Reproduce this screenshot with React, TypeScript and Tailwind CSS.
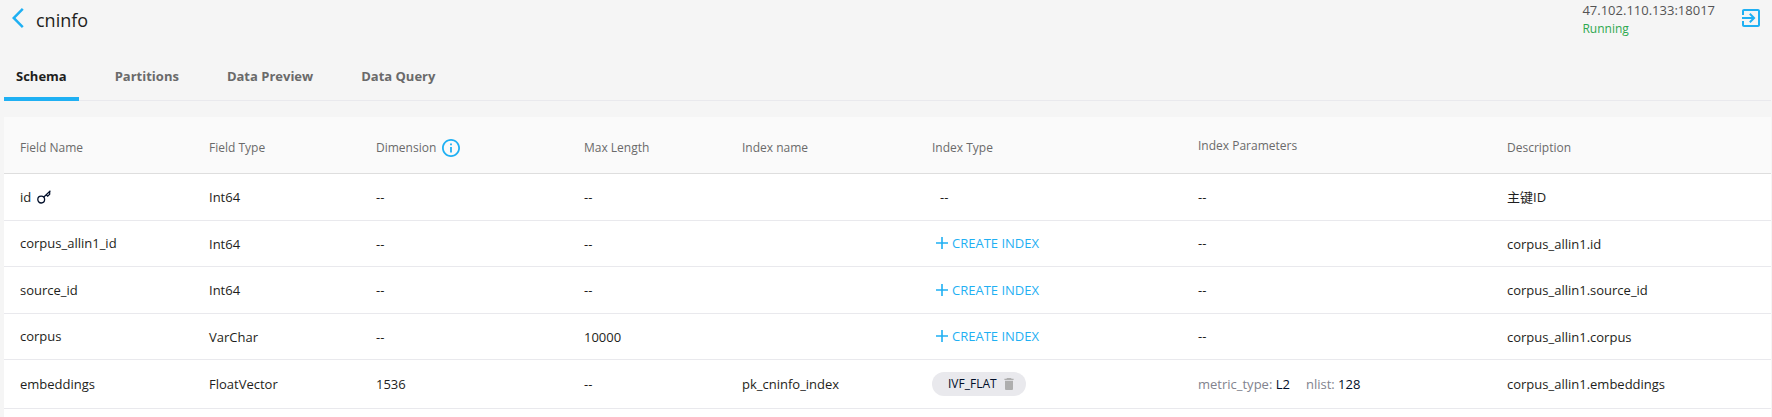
import type { ReactNode } from "react";

type Param = { name: string; value: string };

type Field = {
  name: string;
  primary?: boolean;
  type: string;
  dimension: string;
  maxLength: string;
  indexName: string;
  indexType: string | null;
  params: Param[];
  description: string;
};

const fields: Field[] = [
  { name: "id", primary: true, type: "Int64", dimension: "--", maxLength: "--", indexName: "", indexType: null, params: [], description: "主键ID" },
  { name: "corpus_allin1_id", type: "Int64", dimension: "--", maxLength: "--", indexName: "", indexType: null, params: [], description: "corpus_allin1.id" },
  { name: "source_id", type: "Int64", dimension: "--", maxLength: "--", indexName: "", indexType: null, params: [], description: "corpus_allin1.source_id" },
  { name: "corpus", type: "VarChar", dimension: "--", maxLength: "10000", indexName: "", indexType: null, params: [], description: "corpus_allin1.corpus" },
  {
    name: "embeddings",
    type: "FloatVector",
    dimension: "1536",
    maxLength: "--",
    indexName: "pk_cninfo_index",
    indexType: "IVF_FLAT",
    params: [
      { name: "metric_type", value: "L2" },
      { name: "nlist", value: "128" },
    ],
    description: "corpus_allin1.embeddings",
  },
];

const tabs = ["Schema", "Partitions", "Data Preview", "Data Query"];

function BackIcon() {
  return (
    <svg viewBox="0 0 12 20" className="h-5 w-3" fill="#1fb0f3" aria-hidden="true">
      <path d="M11.67 1.87 9.9.1 0 10l9.9 9.9 1.77-1.77L3.54 10z" />
    </svg>
  );
}

function ExitIcon() {
  return (
    <svg viewBox="0 0 24 24" className="size-6" fill="#1fb0f3" aria-hidden="true">
      <path d="M10.09 15.59 11.5 17l5-5-5-5-1.41 1.41L12.67 11H3v2h9.67zM19 3H5c-1.11 0-2 .9-2 2v4h2V5h14v14H5v-4H3v4c0 1.1.89 2 2 2h14c1.1 0 2-.9 2-2V5c0-1.1-.9-2-2-2z" />
    </svg>
  );
}

function InfoIcon() {
  return (
    <svg viewBox="2 2 20 20" className="size-[18px]" fill="#1fb0f3" aria-hidden="true">
      <path d="M11 7h2v2h-2zm0 4h2v6h-2zm1-9C6.48 2 2 6.48 2 12s4.48 10 10 10 10-4.48 10-10S17.52 2 12 2zm0 18c-4.41 0-8-3.59-8-8s3.59-8 8-8 8 3.59 8 8-3.59 8-8 8z" />
    </svg>
  );
}

function KeyIcon() {
  return (
    <svg viewBox="0 0 14 14" className="size-[14px]" fill="none" stroke="#010e29" role="img" aria-label="Primary key">
      <circle cx="4.2" cy="9.6" r="3.4" strokeWidth="1.3" />
      <path d="M6.6 7.2 13.4 0.8M9.2 4.8l1.5 1.4 2-1.9V1.6" strokeWidth="1.2" />
    </svg>
  );
}

function PlusIcon() {
  return (
    <svg viewBox="0 0 12 12" className="size-3" stroke="#1fb0f3" strokeWidth="1.6" aria-hidden="true">
      <path d="M6 0v12M0 6h12" />
    </svg>
  );
}

function TrashIcon() {
  return (
    <svg viewBox="0 0 10 12" className="h-3 w-[10px]" fill="#aeaeae" aria-hidden="true">
      <path d="M3 0h4l.6.7H9.6V2H.4V.7h2zM1 2.8h8V11q0 1-1 1H2q-1 0-1-1z" />
    </svg>
  );
}

function HeadCell({ children, raised = false }: { children: ReactNode; raised?: boolean }) {
  return (
    <th scope="col" className={raised ? "h-14 px-4 pt-[2px] text-left font-normal" : "h-14 px-4 pt-[6px] text-left font-normal"}>
      {children}
    </th>
  );
}

function IndexType({ field }: { field: Field }) {
  if (field.primary) return <span className="pl-2">--</span>;
  if (field.indexType) {
    return (
      <span className="flex h-6 w-fit items-center gap-[7px] rounded-full bg-[#e9e9ed] pr-3 pl-4 text-xs text-[#010e29]">
        {field.indexType}
        <button type="button" aria-label="Delete index">
          <TrashIcon />
        </button>
      </span>
    );
  }
  return (
    <button type="button" className="flex items-center gap-1 pl-1 text-[#1fb0f3]">
      <PlusIcon />
      CREATE INDEX
    </button>
  );
}

export default function App() {
  return (
    <div className="min-h-screen bg-[#f5f5f5] pl-1 font-['Open_Sans','Noto_Sans_CJK_SC',sans-serif] text-[13px] leading-5 text-[#1e1e20]">
      <header className="flex h-[54px] items-start justify-between pr-[9px]">
        <div className="flex items-start gap-3 pt-2 pl-2">
          <button type="button" aria-label="Back">
            <BackIcon />
          </button>
          <h1 className="text-lg leading-6">cninfo</h1>
        </div>
        <div className="flex items-start gap-6">
          <div>
            <p className="leading-5 text-[#545454]">47.102.110.133:18017</p>
            <p className="text-xs leading-[18px] text-[#2da84f]">Running</p>
          </div>
          <button type="button" aria-label="Disconnect" className="pt-[6px]">
            <ExitIcon />
          </button>
        </div>
      </header>

      <nav className="mr-px flex gap-6 border-b border-[#e9e9ed]" role="tablist">
        {tabs.map((tab, i) => (
          <button
            key={tab}
            type="button"
            role="tab"
            aria-selected={i === 0}
            className={
              i === 0
                ? "-mb-px h-[47px] border-b-4 border-[#1fb0f3] px-3 pt-1 pb-1 font-bold text-[#1e1e20]"
                : "-mb-px h-[47px] border-b-4 border-transparent px-3 pt-1 pb-1 font-bold text-[#6a6a6a]"
            }
          >
            {tab}
          </button>
        ))}
      </nav>

      <div className="mt-4 mr-px bg-white pb-2">
        <table className="w-full table-fixed border-collapse">
          <colgroup>
            <col className="w-[189px]" />
            <col className="w-[167px]" />
            <col className="w-[208px]" />
            <col className="w-[158px]" />
            <col className="w-[190px]" />
            <col className="w-[266px]" />
            <col className="w-[309px]" />
            <col className="w-[280px]" />
          </colgroup>
          <thead className="border-b border-[#dedede] bg-[#fafafa] text-xs text-[#6a6a6a]">
            <tr>
              <HeadCell>Field Name</HeadCell>
              <HeadCell>Field Type</HeadCell>
              <HeadCell>
                <span className="flex items-center gap-[6px]">
                  Dimension
                  <InfoIcon />
                </span>
              </HeadCell>
              <HeadCell>Max Length</HeadCell>
              <HeadCell>Index name</HeadCell>
              <HeadCell>Index Type</HeadCell>
              <HeadCell raised>Index Parameters</HeadCell>
              <HeadCell>Description</HeadCell>
            </tr>
          </thead>
          <tbody>
            {fields.map((f) => (
              <tr
                key={f.name}
                className={
                  f.indexType
                    ? "h-[49px] border-b border-[#e9e9ed]"
                    : "border-b border-[#e9e9ed] odd:h-[47px] even:h-[46px]"
                }
              >
                <td className="px-4">
                  <span className="flex items-center gap-[6px]">
                    {f.name}
                    {f.primary && <KeyIcon />}
                  </span>
                </td>
                <td className="px-4 pt-px">{f.type}</td>
                <td className="px-4 pt-px">{f.dimension}</td>
                <td className="px-4 pt-px">{f.maxLength}</td>
                <td className="px-4 pt-px">{f.indexName}</td>
                <td className="px-4">
                  <IndexType field={f} />
                </td>
                <td className="px-4">
                  {f.params.length === 0 ? (
                    "--"
                  ) : (
                    <span className="flex gap-4 pt-px">
                      {f.params.map((p) => (
                        <span key={p.name} className="text-[#010e29]">
                          <span className="text-[#82838e]">{p.name}:</span> {p.value}
                        </span>
                      ))}
                    </span>
                  )}
                </td>
                <td className="px-4 pt-px">{f.description}</td>
              </tr>
            ))}
          </tbody>
        </table>
      </div>
    </div>
  );
}
